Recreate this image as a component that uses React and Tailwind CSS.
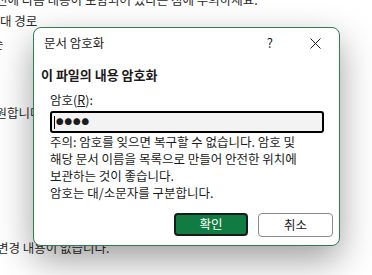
import React from 'react';

// Excel "문서 암호화" dialog over a document page
const FONT = { fontFamily: '"Noto Sans CJK KR", "Noto Sans", sans-serif' };

export default function App() {
  return (
    <div className="relative w-[372px] h-[275px] overflow-hidden bg-white text-[12.5px] text-[#2b2b2b]" style={FONT}>
      {/* page text behind the dialog */}
      <div className="leading-[18px]">
        <div className="-mt-[9px] -ml-[4px] whitespace-nowrap">전에 다음 내용이 포함되어 있다는 점에 주의하세요.</div>
        <div className="mt-[3px] whitespace-nowrap">대 경로</div>
        <div className="mt-[5px] -ml-[8px] whitespace-nowrap">순</div>
        <div className="mt-[51px] -ml-[16px] whitespace-nowrap">지원합니다.</div>
        <div className="mt-[117px] -ml-[3px] whitespace-nowrap">변경 내용이 없습니다.</div>
      </div>

      {/* dialog */}
      <div className="absolute left-[33px] top-[27px] w-[307px] h-[219px] bg-white border border-[#2f7d51] rounded-[8px] shadow-[0_14px_36px_rgba(0,0,0,0.38)] text-[#1b1b1b]">
        {/* Title bar */}
        <div className="flex items-center h-[30px] pl-[10px] pr-[18px]">
          <span className="text-[12.5px]">문서 암호화</span>
          <span className="ml-auto mr-[37px] text-[13px]">?</span>
          <svg width="11" height="11" viewBox="0 0 11 11" className="text-[#1b1b1b]">
            <path d="M0.5 0.5 L10.5 10.5 M10.5 0.5 L0.5 10.5" stroke="currentColor" strokeWidth="1" />
          </svg>
        </div>

        {/* Heading */}
        <div className="mt-[8px] pl-[7px] text-[13px] font-bold leading-[18px]">이 파일의 내용 암호화</div>

        {/* Password */}
        <div className="pl-[16px] pr-[16px]">
          <div className="mt-[7px] leading-[17px]">
            암호(<span className="underline">R</span>):
          </div>
          <div className="mt-[3px] h-[22px] w-[274px] flex items-center border-2 border-black rounded-[3px] bg-[#f3f3f3] pl-[2px]">
            <span className="w-[1px] h-[13px] bg-black" />
            <span className="ml-[1px] text-[7.5px] tracking-[1px] leading-none">●●●●</span>
          </div>
          <div className="leading-[17px] whitespace-nowrap">
            <div>주의: 암호를 잊으면 복구할 수 없습니다. 암호 및</div>
            <div>해당 문서 이름을 목록으로 만들어 안전한 위치에</div>
            <div>보관하는 것이 좋습니다.</div>
            <div>암호는 대/소문자를 구분합니다.</div>
          </div>
        </div>

        {/* Buttons */}
        <div className="mt-[12px] flex justify-end gap-[10px] pr-[6px]">
          <button className="w-[74px] h-[23px] rounded-[4px] bg-[#107c41] border-2 border-[#1a1a1a] text-white text-[12.5px] leading-none">
            확인
          </button>
          <button className="w-[75px] h-[24px] rounded-[4px] bg-white border border-[#8a8a8a] text-[#1b1b1b] text-[12.5px] leading-none">
            취소
          </button>
        </div>
      </div>
    </div>
  );
}
